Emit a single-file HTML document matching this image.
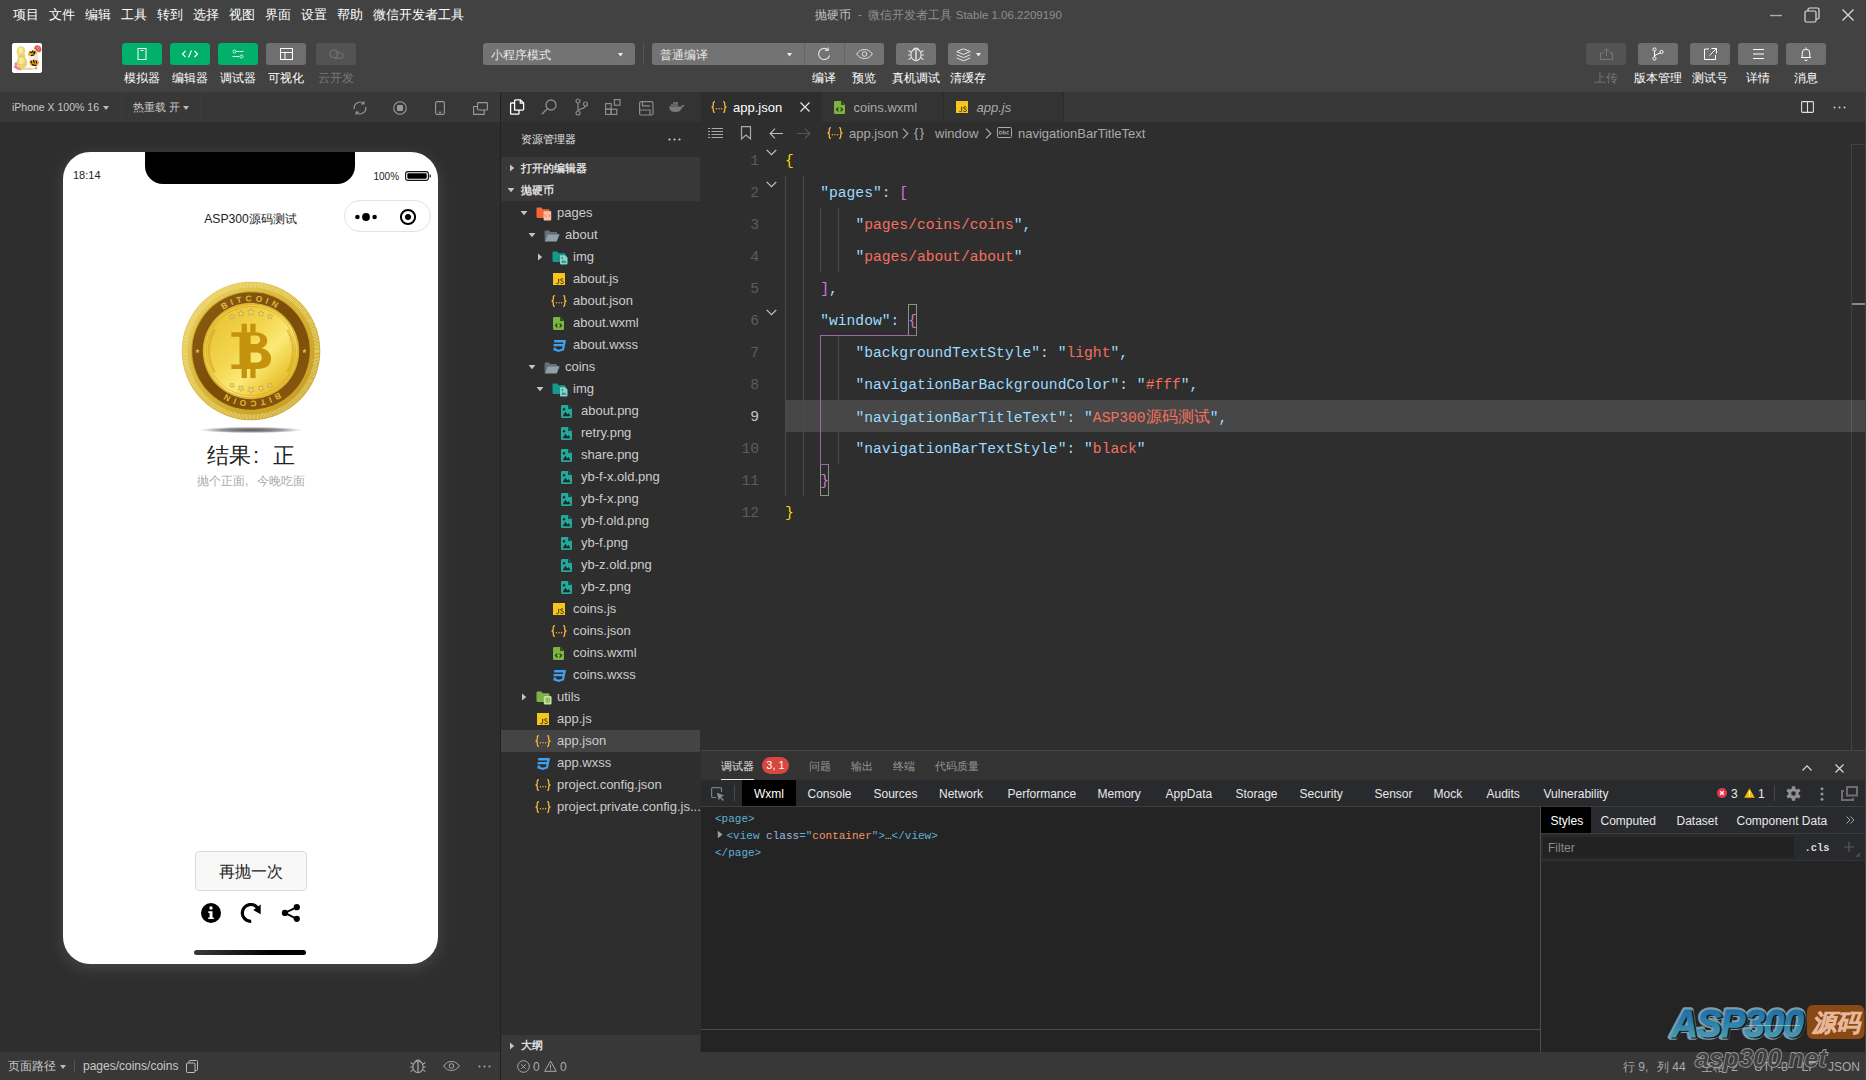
<!DOCTYPE html>
<html lang="zh"><head><meta charset="utf-8"><title>WeChat DevTools</title>
<style>
*{box-sizing:border-box;margin:0;padding:0}
html,body{width:1866px;height:1080px;overflow:hidden;background:#2e2e2e;font-family:"Liberation Sans",sans-serif}
body{font-family:"Liberation Sans",sans-serif;font-size:12px;color:#ccc}
#app{position:relative;width:1866px;height:1080px;overflow:hidden;background:#2e2e2e}
.abs{position:absolute}
.t{position:absolute;white-space:nowrap;line-height:1}
svg{display:block;position:absolute;overflow:visible}
/* ---------- top ---------- */
#menubar{position:absolute;left:0;top:0;width:1866px;height:30px;background:#424242}
#menubar .mi{position:absolute;top:0;height:30px;line-height:30px;font-size:13px;color:#fff;white-space:nowrap}
#title{position:absolute;left:0;top:0;width:1866px;padding-left:11px;height:30px;line-height:30px;text-align:center;font-size:12px;color:#8f8f8f;white-space:nowrap}
#title b{font-weight:normal;color:#c4c4c4}
#toolbar{position:absolute;left:0;top:30px;width:1866px;height:62px;background:#424242}
.tb{position:absolute;top:13px;width:40px;height:22px;border-radius:3px;background:#6f6f6f}
.tb.g{background:#00b06b}
.tb.d{background:#535353}
.tl{position:absolute;top:41px;height:14px;line-height:14px;font-size:12px;color:#fff;text-align:center;white-space:nowrap}
.tl.d{color:#777}
.sel{position:absolute;top:13px;height:22px;border-radius:3px;background:#737373;color:#e8e8e8;font-size:12px;line-height:24px;padding-left:8px;white-space:nowrap}
/* ---------- simulator ---------- */
#simbar{position:absolute;left:0;top:92px;width:500px;height:30px;background:#383838}
#sim{position:absolute;left:0;top:122px;width:500px;height:930px;background:#2e2e2e}
#simfoot{position:absolute;left:0;top:1052px;width:500px;height:28px;background:#383838}
#vdiv{position:absolute;left:500px;top:92px;width:1px;height:988px;background:#222}
#phone{position:absolute;left:63px;top:152px;width:375px;height:812px;background:#fff;border-radius:27px;box-shadow:0 4px 16px rgba(255,255,255,.13);overflow:hidden;color:#000}
/* ---------- explorer ---------- */
#actbar{position:absolute;left:501px;top:92px;width:200px;height:30px;background:#333}
#side{position:absolute;left:501px;top:122px;width:200px;height:930px;background:#2e2e2e}
.hdr{position:absolute;left:501px;width:199px;height:22px;background:#383838;color:#ddd;font-size:11px;font-weight:bold;line-height:22px;white-space:nowrap}
.row{position:absolute;left:501px;width:199px;height:22px;line-height:22px;font-size:13px;color:#ccc;white-space:nowrap}
.row.sel2{background:#444}
.row span{position:absolute;top:0}
/* ---------- editor ---------- */
#tabbar{position:absolute;left:701px;top:92px;width:1165px;height:30px;background:#383838}
.tab{position:absolute;top:0;height:30px;line-height:30px;font-size:13px;color:#aaa;background:#333;border-right:1px solid #2a2a2a;white-space:nowrap}
.tab.on{background:#2e2e2e;color:#fff}
#editor{position:absolute;left:701px;top:122px;width:1165px;height:628px;background:#2e2e2e}
.ln{position:absolute;left:701px;margin-top:1px;width:58px;text-align:right;font-family:"Liberation Mono",monospace;font-size:14.66px;line-height:32px;height:32px;color:#5a5a5a}
.cl{position:absolute;left:785px;margin-top:1px;font-family:"Liberation Mono",monospace;font-size:14.66px;line-height:32px;height:32px;white-space:pre;color:#d4d4d4}
.k{color:#9cdcfe}.s{color:#f4705f}.p{color:#d4d4d4}.b1{color:#ffd700}.b2{color:#da70d6}
/* ---------- panel ---------- */
#panel{position:absolute;left:701px;top:750px;width:1165px;height:302px;background:#333;border-top:1px solid #464646}
#dtbar{position:absolute;left:701px;top:780px;width:1165px;height:27px;background:#292a2d;border-bottom:1px solid #3d3d3d}
.dt{position:absolute;top:780px;height:26px;line-height:28px;font-size:12px;color:#e8e8e8;white-space:nowrap}
#dtbody{position:absolute;left:701px;top:807px;width:1165px;height:245px;background:#242424}
/* ---------- status ---------- */
#status{position:absolute;left:501px;top:1052px;width:1365px;height:28px;background:#383838}

</style></head>
<body>
<div id="app">
<!-- sec_top.html -->
<div id="menubar">
  <div class="mi" style="left:12.5px">项目</div>
  <div class="mi" style="left:48.5px">文件</div>
  <div class="mi" style="left:84.5px">编辑</div>
  <div class="mi" style="left:120.5px">工具</div>
  <div class="mi" style="left:156.5px">转到</div>
  <div class="mi" style="left:192.5px">选择</div>
  <div class="mi" style="left:228.5px">视图</div>
  <div class="mi" style="left:264.5px">界面</div>
  <div class="mi" style="left:300.5px">设置</div>
  <div class="mi" style="left:336.5px">帮助</div>
  <div class="mi" style="left:372.5px">微信开发者工具</div>
</div>
<div id="title"><b>抛硬币</b><span style="margin:0 3.300px"> - </span>微信开发者工具 <span style="font-size:11.500px">Stable 1.06.2209190</span></div>
<!-- window controls -->
<svg style="left:1769px;top:8px" width="14" height="14" viewBox="0 0 14 14"><path d="M1 7.5h12" stroke="#aaa" stroke-width="1.4" fill="none"/></svg>
<svg style="left:1804px;top:7px" width="16" height="16" viewBox="0 0 16 16" fill="none" stroke="#ddd" stroke-width="1.2"><rect x="1" y="4" width="11" height="11" rx="1.5"/><path d="M4 4V2.5A1.5 1.5 0 0 1 5.5 1H13.5A1.5 1.5 0 0 1 15 2.5V10.5A1.5 1.5 0 0 1 13.5 12H12"/></svg>
<svg style="left:1842px;top:9px" width="12" height="12" viewBox="0 0 12 12" fill="none" stroke="#ddd" stroke-width="1.2"><path d="M0.5 0.5L11.5 11.5M11.5 0.5L0.5 11.5"/></svg>

<div id="toolbar">
  <!-- avatar -->
  <div class="abs" style="left:12px;top:13px;width:30px;height:30px;border-radius:3px;background:#fff;overflow:hidden">
    <svg style="left:0;top:0" width="30" height="30" viewBox="0 0 30 30">
      <rect width="30" height="30" fill="#fff"/>
      <ellipse cx="15" cy="25.800" rx="8" ry="1.300" fill="#ead6b0"/>
      <g fill="#ee8493"><circle cx="4.300" cy="21" r="1.700"/><circle cx="3.600" cy="23.800" r="1.800"/><circle cx="6" cy="25.200" r="1.700"/><circle cx="8.300" cy="26" r="1.300"/><circle cx="24" cy="25.300" r="1.200"/></g>
      <ellipse cx="8.900" cy="8.300" rx="4.300" ry="5.200" fill="#eed873"/>
      <ellipse cx="10" cy="19.300" rx="5.200" ry="6.400" fill="#ecd56e"/>
      <rect x="6.300" y="11" width="6.500" height="5" fill="#ecd56e"/>
      <ellipse cx="8.600" cy="7.500" rx="2" ry="3" fill="#f7eca6"/>
      <ellipse cx="9.300" cy="18.300" rx="2.500" ry="3.800" fill="#f6e99c"/>
      <path d="M5.500 13.300h8M5.200 21.500h9.600" stroke="#dcc25a" stroke-width="0.600" fill="none"/>
      <ellipse cx="20.600" cy="10.800" rx="4.600" ry="3.300" fill="#f2ab1c" transform="rotate(-18 20.600 10.800)"/>
      <ellipse cx="22.200" cy="19.600" rx="4.800" ry="3.600" fill="#f0a61a"/>
      <ellipse cx="19.300" cy="14.800" rx="3.400" ry="2.400" fill="#f4f0ea"/>
      <ellipse cx="24.200" cy="14.300" rx="2" ry="3.400" fill="#e6e6e6"/>
      <path d="M17.500 8.700l2.600 1.100M20.300 7.400l1.300 2.800M23 8.200l-0.800 3.100M18.800 12.600l3-0.800M18.800 17.800l1.200 2.800M21.300 16.900l1.100 3.300M24 17.400l0.600 3.300M19.800 21.700l4.800 0.900" stroke="#20160c" stroke-width="1.200" fill="none"/>
      <path d="M22.300 4.400c1-2.600 4-2.800 5.800-0.900 1.900 2 1.800 4.800-0.300 5.700-1.600 0.600-2.400-0.700-3.600-1.800-1.100-1-2.300-1.600-1.900-3z" fill="#d9554f"/>
      <path d="M24 4l3.200 3.600M26 3.200l1.600 2.600" stroke="#f6c8c4" stroke-width="0.600"/>
    </svg>
  </div>
  <!-- left buttons -->
  <div class="tb g" style="left:122px"><svg style="left:15px;top:5px" width="10" height="12" viewBox="0 0 10 12" fill="none" stroke="#fff" stroke-width="1"><rect x="1" y="0.5" width="8" height="11"/><path d="M3.5 2.5h3"/></svg></div>
  <div class="tb g" style="left:170px"><svg style="left:11px;top:6px" width="18" height="10" viewBox="0 0 18 10" fill="none" stroke="#fff" stroke-width="1.1"><path d="M4.5 2L1.5 5l3 3M13.5 2l3 3-3 3M10.5 1.5l-3 7"/></svg></div>
  <div class="tb g" style="left:218px"><svg style="left:14px;top:6px" width="12" height="10" viewBox="0 0 12 10" fill="none" stroke="#d7f5e6" stroke-width="1"><path d="M4 2.5h7.5M0.5 7.5h7"/><circle cx="2.5" cy="2.500" r="1.5"/><circle cx="9.5" cy="7.5" r="1.5"/></svg></div>
  <div class="tb" style="left:266px"><svg style="left:14px;top:5px" width="13" height="12" viewBox="0 0 13 12" fill="none" stroke="#fff" stroke-width="1"><rect x="0.5" y="0.5" width="12" height="11"/><path d="M0.5 4.5h12M5 4.5v7"/></svg></div>
  <div class="tb d" style="left:316px"><svg style="left:13px;top:6px" width="15" height="10" viewBox="0 0 15 10" fill="none" stroke="#777" stroke-width="1"><circle cx="4.8" cy="4.8" r="4"/><path d="M7 5.2a2.6 2.6 0 0 1 4.6-1.2 2.6 2.6 0 0 1 .4 5.2H6"/></svg></div>
  <div class="tl" style="left:112px;width:60px">模拟器</div>
  <div class="tl" style="left:160px;width:60px">编辑器</div>
  <div class="tl" style="left:208px;width:60px">调试器</div>
  <div class="tl" style="left:256px;width:60px">可视化</div>
  <div class="tl d" style="left:306px;width:60px">云开发</div>

  <!-- mode selects -->
  <div class="sel" style="left:483px;width:152px">小程序模式<svg style="left:134.500px;top:9.500px" width="5" height="3.500" viewBox="0 0 6 4"><path d="M0 0h6L3 4z" fill="#eee"/></svg></div>
  <div class="abs" style="left:643px;top:13px;width:1px;height:22px;background:#555"></div>
  <div class="sel" style="left:652px;width:152px;border-radius:3px 0 0 3px">普通编译<svg style="left:134.500px;top:9.500px" width="5" height="3.500" viewBox="0 0 6 4"><path d="M0 0h6L3 4z" fill="#eee"/></svg></div>
  <div class="abs" style="left:804px;top:13px;width:40px;height:22px;background:#737373;border-left:1px solid #646464">
    <svg style="left:12px;top:4px" width="15" height="14" viewBox="0 0 15 14" fill="none" stroke="#e0e0e0" stroke-width="1.1"><path d="M12.6 8.5A5.6 5.6 0 1 1 11.2 3"/><path d="M11.2 0.4V3.4H8.200"/></svg>
  </div>
  <div class="abs" style="left:844px;top:13px;width:40px;height:22px;background:#737373;border-left:1px solid #646464;border-radius:0 3px 3px 0">
    <svg style="left:11px;top:6px" width="17" height="10" viewBox="0 0 17 10" fill="none" stroke="#e0e0e0" stroke-width="1"><path d="M0.6 5C3 1.6 5.600 0.500 8.500 0.500S14 1.600 16.400 5C14 8.400 11.400 9.500 8.500 9.500S3 8.400 0.600 5z"/><circle cx="8.5" cy="5" r="2.3"/></svg>
  </div>
  <div class="tb" style="left:896px;background:#737373">
    <svg style="left:11px;top:3px" width="18" height="16" viewBox="0 0 18 16" fill="none" stroke="#e6e6e6" stroke-width="1.100"><ellipse cx="9" cy="8.800" rx="5.100" ry="5.900"/><path d="M6.300 4.100A2.800 2.800 0 0 1 11.700 4.100"/><path d="M9 3.600V14.400" stroke-width="1.700" stroke="#d2d2d2"/><path d="M4.300 6.400L1.600 4.500M3.900 9H1.100M4.300 11.600L1.600 13.600M13.700 6.400L16.400 4.500M14.100 9H16.900M13.700 11.600L16.400 13.600"/></svg>
  </div>
  <div class="tb" style="left:948px;background:#737373">
    <svg style="left:7.500px;top:4.500px" width="15" height="14" viewBox="0 0 15 14" fill="none" stroke="#e6e6e6" stroke-width="1"><path d="M7.500 0.800L14.300 3.600 7.500 6.400 0.700 3.600z"/><path d="M0.700 6.800l6.800 2.800 6.800-2.800M0.700 10l6.800 2.800 6.800-2.800"/></svg>
    <svg style="left:28px;top:10px" width="5" height="3.500" viewBox="0 0 6 4"><path d="M0 0h6L3 4z" fill="#eee"/></svg>
  </div>
  <div class="tl" style="left:794px;width:60px">编译</div>
  <div class="tl" style="left:834px;width:60px">预览</div>
  <div class="tl" style="left:886px;width:60px">真机调试</div>
  <div class="tl" style="left:938px;width:60px">清缓存</div>

  <!-- right buttons -->
  <div class="tb d" style="left:1586px"><svg style="left:14px;top:5px" width="13" height="12" viewBox="0 0 13 12" fill="none" stroke="#777" stroke-width="1"><path d="M3.500 5H0.500v6.500h12V5H9.500M6.500 8V0.800M3.800 3.400L6.500 0.700l2.700 2.700"/></svg></div>
  <div class="tb" style="left:1638px"><svg style="left:14px;top:4px" width="12" height="14" viewBox="0 0 12 14" fill="none" stroke="#fff" stroke-width="1"><circle cx="2.5" cy="2.500" r="1.6"/><circle cx="2.5" cy="11.500" r="1.6"/><circle cx="9.500" cy="5" r="1.600"/><path d="M2.500 4.100v5.800M2.500 9.500c0-2.500 5-2.500 5.800-3.500"/></svg></div>
  <div class="tb" style="left:1690px"><svg style="left:14px;top:5px" width="13" height="12" viewBox="0 0 13 12" fill="none" stroke="#fff" stroke-width="1"><path d="M5 1H0.500v10.500h11V7M7.500 0.500h5v5M12.300 0.700L5.500 7.500"/></svg></div>
  <div class="tb" style="left:1738px"><svg style="left:15px;top:6px" width="11" height="10" viewBox="0 0 11 10" fill="none" stroke="#fff" stroke-width="1"><path d="M0 0.500h11M0 5h11M0 9.500h11"/></svg></div>
  <div class="tb" style="left:1786px"><svg style="left:14px;top:4px" width="12" height="14" viewBox="0 0 12 14" fill="none" stroke="#fff" stroke-width="1"><path d="M6 0.500v1.200M1 10.500h10M2.200 10.500V6a3.800 3.800 0 0 1 7.600 0v4.500M4.800 12.500a1.200 1.200 0 0 0 2.400 0"/></svg></div>
  <div class="tl d" style="left:1576px;width:60px">上传</div>
  <div class="tl" style="left:1628px;width:60px">版本管理</div>
  <div class="tl" style="left:1680px;width:60px">测试号</div>
  <div class="tl" style="left:1728px;width:60px">详情</div>
  <div class="tl" style="left:1776px;width:60px">消息</div>
</div>

<!-- sec_sim.html -->
<div id="simbar">
  <div class="t" style="left:12px;top:10px;font-size:10.500px;color:#c8c8c8">iPhone X 100% 16</div>
  <svg style="left:102.500px;top:14px" width="6" height="4" viewBox="0 0 6 4"><path d="M0 0h6L3 4z" fill="#bbb"/></svg>
  <div class="abs" style="left:121px;top:0;width:1px;height:30px;background:#3d3d3d"></div><div class="abs" style="left:200px;top:0;width:1px;height:30px;background:#3c3c3c"></div>
  <div class="t" style="left:132.500px;top:10px;font-size:11px;color:#c8c8c8">热重载 开</div>
  <svg style="left:183px;top:14px" width="6" height="4" viewBox="0 0 6 4"><path d="M0 0h6L3 4z" fill="#bbb"/></svg>
  <!-- refresh -->
  <svg style="left:353px;top:9px" width="14" height="14" viewBox="0 0 14 14" fill="none" stroke="#9a9a9a" stroke-width="1.1"><path d="M1.300 8.200A5.800 5.800 0 0 1 10.800 2.600"/><path d="M10.900 0.300V2.900H8.300"/><path d="M12.700 5.800A5.800 5.800 0 0 1 3.200 11.400"/><path d="M3.100 13.700V11.100H5.700"/></svg>
  <!-- stop -->
  <svg style="left:393px;top:9px" width="14" height="14" viewBox="0 0 14 14"><circle cx="7" cy="7" r="6.300" fill="none" stroke="#9a9a9a" stroke-width="1.1"/><rect x="4" y="4" width="6" height="6" rx="1" fill="#9a9a9a"/></svg>
  <!-- phone -->
  <svg style="left:435px;top:9px" width="10" height="14" viewBox="0 0 10 14" fill="none" stroke="#9a9a9a" stroke-width="1.100"><rect x="0.600" y="0.600" width="8.800" height="12.800" rx="1.500"/><path d="M3.500 11.200h3"/></svg>
  <!-- windows -->
  <svg style="left:473px;top:9.500px" width="15" height="13" viewBox="0 0 15 13" fill="none" stroke="#9a9a9a" stroke-width="1.100"><rect x="4.500" y="0.600" width="9.900" height="7.400" rx="0.800"/><path d="M4.500 4.500H0.600v7.900h10.600V8"/></svg>
</div>
<div id="sim"></div>
<div id="phone">
  <!-- notch -->
  <div class="abs" style="left:82px;top:0;width:210px;height:32px;background:#000;border-radius:0 0 18px 18px"></div>
  <div class="t" style="left:10px;top:17.500px;font-size:11px;color:#222">18:14</div>
  <div class="t" style="left:310.500px;top:19.500px;font-size:10px;color:#222">100%</div>
  <svg style="left:342px;top:19px" width="27" height="10" viewBox="0 0 27 10"><rect x="0.600" y="0.600" width="22.800" height="8.800" rx="2.400" fill="none" stroke="#111" stroke-width="1.100"/><rect x="2.300" y="2.300" width="19.400" height="5.400" rx="1.100" fill="#000"/><path d="M24.600 3.200v3.600c0.900-0.300 1.400-0.900 1.400-1.800s-0.500-1.500-1.400-1.800z" fill="#111"/></svg>
  <!-- nav -->
  <div class="t" style="left:0;top:61px;width:375px;text-align:center;font-size:12.200px;color:#222">ASP300源码测试</div>
  <div class="abs" style="left:281px;top:48px;width:87px;height:32px;border:1px solid #e2e2e2;border-radius:16px;background:#fff"></div>
  <svg style="left:290px;top:59.600px" width="26" height="10" viewBox="0 0 26 10" fill="#000"><circle cx="4.400" cy="5" r="2.300"/><circle cx="13" cy="5" r="3.900"/><circle cx="21.600" cy="5" r="2.300"/></svg>
  <svg style="left:336.200px;top:55.600px" width="18" height="18" viewBox="0 0 18 18"><circle cx="9" cy="9" r="7.100" fill="none" stroke="#000" stroke-width="2"/><circle cx="9" cy="9" r="3" fill="#000"/></svg>
  <!-- coin -->
  <svg style="left:116.500px;top:127.500px" width="142" height="160" viewBox="-71 -71 142 160">
    <defs>
      <radialGradient id="gsh" cx="50%" cy="50%" r="50%"><stop offset="0" stop-color="#4a4a50" stop-opacity=".95"/><stop offset=".6" stop-color="#6a6a70" stop-opacity=".7"/><stop offset="1" stop-color="#888" stop-opacity="0"/></radialGradient>
      <linearGradient id="grim" x1="0" y1="0" x2="1" y2="1"><stop offset="0" stop-color="#ecd668"/><stop offset=".5" stop-color="#d7b433"/><stop offset="1" stop-color="#bf981f"/></linearGradient>
      <linearGradient id="gbr" x1="0" y1="0" x2="1" y2="1"><stop offset="0" stop-color="#8d5f12"/><stop offset=".5" stop-color="#7a4c08"/><stop offset="1" stop-color="#8a5a0e"/></linearGradient>
      <linearGradient id="gin" x1="0" y1="0" x2="1" y2="1"><stop offset="0" stop-color="#e6bd2c"/><stop offset=".42" stop-color="#f3d64e"/><stop offset=".6" stop-color="#fbea76"/><stop offset=".8" stop-color="#ecc638"/><stop offset="1" stop-color="#d6a51c"/></linearGradient>
      <path id="arcT" d="M-49.700 0A49.700 49.700 0 0 1 49.700 0"/>
      <path id="arcB" d="M56.500 0A56.500 56.500 0 0 1 -56.500 0"/>
    </defs>
    <ellipse cx="0" cy="79" rx="52" ry="3.200" fill="url(#gsh)"/>
    <circle r="69.300" fill="url(#grim)"/>
    <circle r="66" fill="none" stroke="#f6e69a" stroke-width="5" stroke-dasharray="0.700 0.700" opacity=".75"/>
    <circle r="59.800" fill="#cfa52a"/>
    <circle r="58.800" fill="url(#gbr)"/>
    <circle r="48.200" fill="#dcb535"/>
    <circle r="46.300" fill="url(#gin)"/>
    <circle r="44.600" fill="none" stroke="#cc9a16" stroke-width="0.700" opacity=".7"/>
    <path d="M-36.400-21A42 42 0 0 0 -36.400 21M36.400-21A42 42 0 0 1 36.400 21" fill="none" stroke="#c6951a" stroke-width="2.500" stroke-dasharray="1.100 0.700" opacity=".7"/>
    <g transform="rotate(180)"><text font-family="Liberation Sans, sans-serif" font-weight="bold" font-size="8.500" fill="#e0b940" letter-spacing="3.500" text-anchor="middle"><textPath href="#arcT" startOffset="50%">BITCOIN</textPath></text></g>
    <text font-family="Liberation Sans, sans-serif" font-weight="bold" font-size="8.500" fill="#e0b940" letter-spacing="3.500" text-anchor="middle"><textPath href="#arcT" startOffset="50%">BITCOIN</textPath></text>
    <!-- side stars -->
    <path id="st" d="M0-2.400l0.700 1.600 1.700 0.100-1.300 1.100 0.400 1.700L0 1.200l-1.500 0.900 0.400-1.700-1.300-1.100 1.700-0.100z" fill="#dcb944" transform="translate(-53.500 0)"/>
    <path d="M0-2.400l0.700 1.600 1.700 0.100-1.300 1.100 0.400 1.700L0 1.200l-1.500 0.900 0.400-1.700-1.300-1.100 1.700-0.100z" fill="#dcb944" transform="translate(53.500 0)"/>
    <!-- top/bottom stars -->
    <g fill="#ead690" stroke="#b48a18" stroke-width="0.450" opacity=".95">
      <path d="M0-3.400l1 2.300 2.400 0.200-1.800 1.600 0.600 2.400L0 1.800l-2.200 1.300 0.600-2.400-1.800-1.600 2.400-0.200z" transform="translate(0 -39)"/>
      <path d="M0-3l0.900 2 2.100 0.200-1.600 1.400 0.500 2.100L0 1.600l-1.900 1.100 0.500-2.100-1.600-1.400 2.100-0.200z" transform="translate(-10 -37.500)"/>
      <path d="M0-3l0.900 2 2.100 0.200-1.600 1.400 0.500 2.100L0 1.600l-1.900 1.100 0.500-2.100-1.600-1.400 2.100-0.200z" transform="translate(10 -37.500)"/>
      <path d="M0-2.600l0.800 1.700 1.800 0.200-1.400 1.200 0.400 1.800L0 1.400l-1.600 0.900 0.400-1.800-1.400-1.200 1.800-0.200z" transform="translate(-19 -34.500)"/>
      <path d="M0-2.600l0.800 1.700 1.800 0.200-1.400 1.200 0.400 1.800L0 1.400l-1.600 0.900 0.400-1.800-1.400-1.200 1.800-0.200z" transform="translate(19 -34.500)"/>
      <path d="M0-3.400l1 2.300 2.400 0.200-1.800 1.600 0.600 2.400L0 1.800l-2.200 1.300 0.600-2.400-1.800-1.600 2.400-0.200z" transform="translate(0 39) rotate(180)"/>
      <path d="M0-3l0.900 2 2.100 0.200-1.600 1.400 0.500 2.100L0 1.600l-1.900 1.100 0.500-2.100-1.600-1.400 2.100-0.200z" transform="translate(-10 37.500) rotate(180)"/>
      <path d="M0-3l0.900 2 2.100 0.200-1.600 1.400 0.500 2.100L0 1.600l-1.900 1.100 0.500-2.100-1.600-1.400 2.100-0.200z" transform="translate(10 37.500) rotate(180)"/>
      <path d="M0-2.600l0.800 1.700 1.800 0.200-1.400 1.200 0.400 1.800L0 1.400l-1.600 0.900 0.400-1.800-1.400-1.200 1.800-0.200z" transform="translate(-19 34.500) rotate(180)"/>
      <path d="M0-2.600l0.800 1.700 1.800 0.200-1.400 1.200 0.400 1.800L0 1.400l-1.600 0.900 0.400-1.800-1.400-1.200 1.800-0.200z" transform="translate(19 34.500) rotate(180)"/>
    </g>
    <!-- B symbol -->
    <g fill="#c4920d">
      <rect x="-9.400" y="-27.300" width="5.300" height="9"/><rect x="-0.700" y="-27.300" width="5.300" height="9"/>
      <rect x="-9.400" y="17.500" width="5.300" height="9.600"/><rect x="-0.700" y="17.500" width="5.300" height="9.600"/>
      <path fill-rule="evenodd" d="M-19.600-18.700H4C12-18.700 16.200-15 16.200-10.500C16.200-6.500 13.800-4 10.500-2.800C16-1.800 20.100 2 20.100 7.500C20.100 14 15 18 6.500 18H-19.600V13.500H-11.500V-14.200H-19.600ZM-0.400-15.500V-7H4.500C7.700-7 9.200-8.600 9.200-11.200C9.200-13.900 7.700-15.500 4.500-15.500ZM-0.400 1.500V11.500H5.200C9 11.500 10.700 9.600 10.700 6.500C10.700 3.400 9 1.500 5.200 1.500Z"/>
    </g>
  </svg>
  <div class="t" style="left:0;top:293px;width:375px;text-align:center;font-size:22px;color:#222">结果<span style="display:inline-block;width:22px;text-align:left;padding-left:2.400px">:</span>正</div>
  <div class="t" style="left:0;top:323px;width:375px;text-align:center;font-size:12px;color:#aaa">抛个正面<span style="display:inline-block;width:12px;text-align:left;padding-left:0.500px">,</span>今晚吃面</div>
  <!-- button -->
  <div class="abs" style="left:132px;top:699px;width:112px;height:40px;border:1px solid #dcdcdc;border-radius:4px;background:#f8f8f8;text-align:center;line-height:40px;font-size:16px;color:#222">再抛一次</div>
  <!-- info icon -->
  <svg style="left:138px;top:751px" width="20" height="20" viewBox="0 0 20 20"><circle cx="10" cy="10" r="10" fill="#000"/><circle cx="10" cy="5" r="1.700" fill="#fff"/><path d="M7.300 8.300h4.200v6.200h1.300v1.600H7.200v-1.600h1.400V9.900H7.300z" fill="#fff"/></svg>
  <!-- retry icon -->
  <svg style="left:177px;top:750px" width="22" height="22" viewBox="0 0 22 22"><path d="M11.200 19.300A8.400 8.400 0 1 1 17.200 5.500" fill="none" stroke="#000" stroke-width="3.200"/><path d="M20.700 2.600V12.300L13.300 8.100z" fill="#000"/></svg>
  <!-- share icon -->
  <svg style="left:218px;top:751px" width="20" height="20" viewBox="0 0 20 20"><path d="M15.800 4.200L3.900 9.900l11.900 5.900" fill="none" stroke="#000" stroke-width="1.900"/><circle cx="15.800" cy="4.200" r="3.100"/><circle cx="3.900" cy="9.900" r="3.100"/><circle cx="15.800" cy="15.800" r="3.100"/></svg>
  <!-- home indicator -->
  <div class="abs" style="left:131px;top:798px;width:112px;height:5px;border-radius:3px;background:linear-gradient(90deg,#3a3a3a,#000 70%)"></div>
</div>
<div id="simfoot">
  <div class="t" style="left:8px;top:8px;font-size:12px;color:#c8c8c8">页面路径</div>
  <svg style="left:60px;top:13px" width="6" height="4" viewBox="0 0 6 4"><path d="M0 0h6L3 4z" fill="#bbb"/></svg>
  <div class="abs" style="left:74px;top:8px;width:1px;height:12px;background:#555"></div>
  <div class="t" style="left:83px;top:8px;font-size:12px;color:#c8c8c8">pages/coins/coins</div>
  <svg style="left:186px;top:8px" width="12" height="13" viewBox="0 0 12 13" fill="none" stroke="#bbb" stroke-width="1"><rect x="0.500" y="3" width="8.500" height="9.500" rx="1"/><path d="M3 3V1.500a1 1 0 0 1 1-1h6.500a1 1 0 0 1 1 1V9.500a1 1 0 0 1-1 1H9"/></svg>
  <svg style="left:409px;top:6px" width="18" height="16" viewBox="0 0 18 16" fill="none" stroke="#a8a8a8" stroke-width="1.100"><ellipse cx="9" cy="8.800" rx="5.100" ry="5.900"/><path d="M6.300 4.100A2.800 2.800 0 0 1 11.700 4.100"/><path d="M9 3.600V14.400" stroke-width="1.700" stroke="#8e8e8e"/><path d="M4.300 6.400L1.600 4.500M3.900 9H1.100M4.300 11.600L1.600 13.600M13.700 6.400L16.400 4.500M14.100 9H16.900M13.700 11.600L16.400 13.600"/></svg>
  <svg style="left:443px;top:9px" width="17" height="10" viewBox="0 0 17 10" fill="none" stroke="#aaa" stroke-width="1"><path d="M0.600 5C3 1.600 5.600 0.500 8.500 0.500S14 1.600 16.400 5C14 8.400 11.400 9.500 8.500 9.500S3 8.400 0.600 5z"/><circle cx="8.500" cy="5" r="2.300"/></svg>
  <svg style="left:478px;top:13px" width="13" height="3" viewBox="0 0 13 3" fill="#aaa"><circle cx="1.500" cy="1.500" r="1"/><circle cx="6.500" cy="1.500" r="1"/><circle cx="11.500" cy="1.500" r="1"/></svg>
</div>
<div id="vdiv"></div>

<!-- sec_explorer.html -->
<svg width="0" height="0" style="left:0;top:0"><defs>
<symbol id="i-down" viewBox="0 0 8 6"><path d="M0.600 1h6.800L4 5.200z" fill="#c5c5c5"/></symbol>
<symbol id="i-right" viewBox="0 0 6 8"><path d="M1 0.600v6.800L5.200 4z" fill="#c5c5c5"/></symbol>
<symbol id="i-fpages" viewBox="0 0 16 14"><path d="M0.500 1.800C0.500 1.100 1 0.600 1.700 0.600H5.200L6.800 2.200H12.300C13 2.200 13.500 2.700 13.500 3.400V9.800C13.500 10.500 13 11 12.300 11H1.700C1 11 0.500 10.500 0.500 9.800Z" fill="#f2673a"/><path d="M7.600 4.200H15.200V12.400C15.200 13 14.700 13.500 14.100 13.500H8.700C8.100 13.500 7.600 13 7.600 12.400Z" fill="#fbc0ab"/><path d="M10.400 7.200L9 8.700l1.400 1.500M12.400 7.200l1.400 1.500-1.400 1.500" fill="none" stroke="#f2673a" stroke-width="0.900"/></symbol>
<symbol id="i-fopen" viewBox="0 0 16 12"><path d="M0.600 1.600C0.600 1 1.100 0.500 1.700 0.500H5L6.500 2H12C12.600 2 13.100 2.500 13.100 3.100V4H3.800L0.600 10.500Z" fill="#62727d"/><path d="M3.600 4.300H15.600L12.700 11.500H0.700Z" fill="#8fa0ab"/></symbol>
<symbol id="i-fimg" viewBox="0 0 16 14"><path d="M0.500 1.800C0.500 1.100 1 0.600 1.700 0.600H5.200L6.800 2.200H12.300C13 2.200 13.500 2.700 13.500 3.400V9.800C13.500 10.500 13 11 12.300 11H1.700C1 11 0.500 10.500 0.500 9.800Z" fill="#16998a"/><path d="M8 4.200H13.200L15.500 6.500V12.400C15.500 13 15 13.500 14.400 13.500H9.100C8.500 13.500 8 13 8 12.400Z" fill="#86d3c8"/><path d="M9.200 11.800L11 8.800l1.200 1.600 0.900-0.900 1.400 2.300z" fill="#16998a"/><circle cx="10.300" cy="7" r="0.900" fill="#16998a"/></symbol>
<symbol id="i-futil" viewBox="0 0 16 14"><path d="M0.500 1.800C0.500 1.100 1 0.600 1.700 0.600H5.200L6.800 2.200H12.300C13 2.200 13.500 2.700 13.500 3.400V9.800C13.500 10.500 13 11 12.300 11H1.700C1 11 0.500 10.500 0.500 9.800Z" fill="#7cb342"/><rect x="7.800" y="5" width="7.700" height="8.500" rx="1.200" fill="#c5e1a5"/><path d="M10 7.200h3.300v4h-3.300zM11.650 7.200v4M10 9.200h3.300" fill="none" stroke="#7cb342" stroke-width="0.900"/></symbol>
<symbol id="i-js" viewBox="0 0 12 12"><rect width="12" height="12" fill="#f6c41f"/><path d="M5.700 5.800v3.500c0 1-0.500 1.400-1.300 1.400-0.500 0-0.900-0.200-1.200-0.600M10.300 6.500c-0.300-0.500-0.800-0.700-1.400-0.700-0.800 0-1.300 0.400-1.300 1 0 1.500 2.900 0.900 2.900 2.500 0 0.800-0.600 1.300-1.600 1.300-0.700 0-1.300-0.300-1.600-0.800" fill="none" stroke="#3b3100" stroke-width="1"/></symbol>
<symbol id="i-json" viewBox="0 0 16 12"><path d="M4 0.700C2.600 0.700 2.300 1.400 2.300 2.300V4.200C2.300 5.200 1.800 5.800 0.700 6 1.800 6.200 2.300 6.800 2.300 7.800V9.700C2.300 10.600 2.600 11.300 4 11.300M12 0.700C13.400 0.700 13.700 1.400 13.700 2.300V4.200C13.700 5.200 14.200 5.800 15.300 6 14.200 6.200 13.700 6.800 13.700 7.800V9.700C13.700 10.600 13.400 11.300 12 11.300" fill="none" stroke="#f3b63a" stroke-width="1.300"/><circle cx="5.400" cy="7.800" r="0.750" fill="#f3b63a"/><circle cx="8" cy="7.800" r="0.750" fill="#f3b63a"/><circle cx="10.600" cy="7.800" r="0.750" fill="#f3b63a"/></symbol>
<symbol id="i-wxml" viewBox="0 0 11 13"><path d="M1.300 0H7L11 4V11.700C11 12.400 10.400 13 9.700 13H1.300C0.600 13 0 12.400 0 11.700V1.300C0 0.600 0.600 0 1.300 0Z" fill="#7db342"/><path d="M7 0V4H11Z" fill="#33500f"/><path d="M4.400 6.600L2.500 8.500l1.900 1.900M6.600 6.600l1.900 1.900-1.900 1.900" fill="none" stroke="#1d2f08" stroke-width="1.100"/></symbol>
<symbol id="i-wxss" viewBox="0 0 14 12"><path d="M2.200 0H14L12 10.200 6.600 12 1.300 10.200 1.800 7.600H4.100L3.900 8.700 7 9.800 10.100 8.700 10.500 6.300H1.300L1.800 3.900H11L11.300 2.400H2.200Z" fill="#3fa2f0"/></symbol>
<symbol id="i-png" viewBox="0 0 11 13"><path d="M1.300 0H7L11 4V11.700C11 12.400 10.400 13 9.700 13H1.300C0.600 13 0 12.400 0 11.700V1.300C0 0.600 0.600 0 1.300 0Z" fill="#27a79a"/><path d="M7 0V4H11Z" fill="#0c4f48"/><path d="M1.600 11.200L4.400 6.800l2 2.600 1.200-1.300 2 3.100z" fill="#1b2b2a"/><circle cx="3" cy="4.300" r="1.200" fill="#1b2b2a"/></symbol>
</defs></svg>
<div id="actbar">
<svg style="left:8px;top:6px" width="16" height="18" viewBox="0 0 16 18" fill="none" stroke="#fff" stroke-width="1.300" stroke-linejoin="round"><path d="M5.600 12.100V2.700C5.600 2.200 5.900 1.900 6.400 1.900H11.500L14.600 5V11.300C14.600 11.800 14.300 12.100 13.800 12.100Z"/><path d="M11.300 1.900V5.200H14.600"/><path d="M5.600 5H2.400C1.900 5 1.600 5.300 1.600 5.800V15.400C1.600 15.900 1.900 16.200 2.400 16.200H9.200C9.700 16.200 10 15.900 10 15.400V12.100"/></svg>
<svg style="left:40px;top:7px" width="16" height="16" viewBox="0 0 16 16" fill="none" stroke="#8c8c8c" stroke-width="1.300"><circle cx="10" cy="6" r="5"/><path d="M6.500 9.500L0.800 15.200"/></svg>
<svg style="left:74px;top:6px" width="13" height="18" viewBox="0 0 13 18" fill="none" stroke="#8c8c8c" stroke-width="1.200"><circle cx="3" cy="3" r="2"/><circle cx="3" cy="15" r="2"/><circle cx="10.500" cy="6" r="2"/><path d="M3 5v8M10.500 8c0 3-7.500 2.500-7.500 5"/></svg>
<svg style="left:104px;top:7px" width="16" height="16" viewBox="0 0 16 16" fill="none" stroke="#8c8c8c" stroke-width="1.200"><rect x="0.600" y="4.600" width="5.600" height="5.600"/><rect x="0.600" y="10.200" width="5.600" height="5.200"/><rect x="6.200" y="10.200" width="5.600" height="5.200"/><rect x="9.400" y="0.600" width="5.600" height="5.600"/></svg>
<svg style="left:138px;top:9px" width="15" height="15" viewBox="0 0 15 15" fill="none" stroke="#8c8c8c" stroke-width="1.200"><rect x="0.600" y="0.600" width="13.400" height="13.400" rx="1.500"/><path d="M3.500 0.600v4.200h7.500M0.600 9h10.400v5"/></svg>
<svg style="left:167px;top:9px" width="17" height="12" viewBox="0 0 20 14" fill="#7a7a7a"><path d="M1 6.500h14.500c0.800-0.300 1.400-1.200 1.300-2.200 1 0.500 1.600 0.300 2.600 0.400-0.300 1.600-1.400 2.300-2.700 2.500C15.600 10.900 12.800 13 8.500 13 4 13 1.500 10.800 1 6.500z"/><path d="M3.500 3.800h2.300v2.200H3.500zM6.300 3.800h2.300v2.200H6.300zM9.100 3.800h2.300v2.200H9.100zM6.300 1.200h2.300v2.200H6.300zM9.100 1.200h2.300v2.200H9.100z"/></svg>
</div>
<div id="side"></div>
<div class="t" style="left:521px;top:134px;font-size:11px;color:#e4e4e4">资源管理器</div>
<svg style="left:668px;top:137.500px" width="13" height="3" viewBox="0 0 13 3" fill="#ccc"><circle cx="1.500" cy="1.500" r="1.100"/><circle cx="6.500" cy="1.500" r="1.100"/><circle cx="11.500" cy="1.500" r="1.100"/></svg>
<div class="hdr" style="top:157px"><svg style="left:7.500px;top:7px" width="6" height="8"><use href="#i-right"/></svg><span style="position:absolute;left:20px">打开的编辑器</span></div>
<div class="hdr" style="top:179px"><svg style="left:6px;top:8px" width="8" height="6"><use href="#i-down"/></svg><span style="position:absolute;left:20px">抛硬币</span></div>
<div class="row" style="top:202px"><svg style="left:19px;top:8px" width="8" height="6"><use href="#i-down"/></svg><svg style="left:34.5px;top:4.5px" width="16" height="14"><use href="#i-fpages"/></svg><span style="left:56px">pages</span></div>
<div class="row" style="top:224px"><svg style="left:27px;top:8px" width="8" height="6"><use href="#i-down"/></svg><svg style="left:42.5px;top:5.5px" width="16" height="12"><use href="#i-fopen"/></svg><span style="left:64px">about</span></div>
<div class="row" style="top:246px"><svg style="left:36px;top:7px" width="6" height="8"><use href="#i-right"/></svg><svg style="left:50.5px;top:4.5px" width="16" height="14"><use href="#i-fimg"/></svg><span style="left:72px">img</span></div>
<div class="row" style="top:268px"><svg style="left:51.5px;top:5px" width="12" height="12"><use href="#i-js"/></svg><span style="left:72px">about.js</span></div>
<div class="row" style="top:290px"><svg style="left:49.5px;top:5px" width="16" height="12"><use href="#i-json"/></svg><span style="left:72px">about.json</span></div>
<div class="row" style="top:312px"><svg style="left:52px;top:4.5px" width="11" height="13"><use href="#i-wxml"/></svg><span style="left:72px">about.wxml</span></div>
<div class="row" style="top:334px"><svg style="left:51px;top:5.5px" width="14" height="12"><use href="#i-wxss"/></svg><span style="left:72px">about.wxss</span></div>
<div class="row" style="top:356px"><svg style="left:27px;top:8px" width="8" height="6"><use href="#i-down"/></svg><svg style="left:42.5px;top:5.5px" width="16" height="12"><use href="#i-fopen"/></svg><span style="left:64px">coins</span></div>
<div class="row" style="top:378px"><svg style="left:35px;top:8px" width="8" height="6"><use href="#i-down"/></svg><svg style="left:50.5px;top:4.5px" width="16" height="14"><use href="#i-fimg"/></svg><span style="left:72px">img</span></div>
<div class="row" style="top:400px"><svg style="left:60px;top:4.5px" width="11" height="13"><use href="#i-png"/></svg><span style="left:80px">about.png</span></div>
<div class="row" style="top:422px"><svg style="left:60px;top:4.5px" width="11" height="13"><use href="#i-png"/></svg><span style="left:80px">retry.png</span></div>
<div class="row" style="top:444px"><svg style="left:60px;top:4.5px" width="11" height="13"><use href="#i-png"/></svg><span style="left:80px">share.png</span></div>
<div class="row" style="top:466px"><svg style="left:60px;top:4.5px" width="11" height="13"><use href="#i-png"/></svg><span style="left:80px">yb-f-x.old.png</span></div>
<div class="row" style="top:488px"><svg style="left:60px;top:4.5px" width="11" height="13"><use href="#i-png"/></svg><span style="left:80px">yb-f-x.png</span></div>
<div class="row" style="top:510px"><svg style="left:60px;top:4.5px" width="11" height="13"><use href="#i-png"/></svg><span style="left:80px">yb-f.old.png</span></div>
<div class="row" style="top:532px"><svg style="left:60px;top:4.5px" width="11" height="13"><use href="#i-png"/></svg><span style="left:80px">yb-f.png</span></div>
<div class="row" style="top:554px"><svg style="left:60px;top:4.5px" width="11" height="13"><use href="#i-png"/></svg><span style="left:80px">yb-z.old.png</span></div>
<div class="row" style="top:576px"><svg style="left:60px;top:4.5px" width="11" height="13"><use href="#i-png"/></svg><span style="left:80px">yb-z.png</span></div>
<div class="row" style="top:598px"><svg style="left:51.5px;top:5px" width="12" height="12"><use href="#i-js"/></svg><span style="left:72px">coins.js</span></div>
<div class="row" style="top:620px"><svg style="left:49.5px;top:5px" width="16" height="12"><use href="#i-json"/></svg><span style="left:72px">coins.json</span></div>
<div class="row" style="top:642px"><svg style="left:52px;top:4.5px" width="11" height="13"><use href="#i-wxml"/></svg><span style="left:72px">coins.wxml</span></div>
<div class="row" style="top:664px"><svg style="left:51px;top:5.5px" width="14" height="12"><use href="#i-wxss"/></svg><span style="left:72px">coins.wxss</span></div>
<div class="row" style="top:686px"><svg style="left:20px;top:7px" width="6" height="8"><use href="#i-right"/></svg><svg style="left:34.5px;top:4.5px" width="16" height="14"><use href="#i-futil"/></svg><span style="left:56px">utils</span></div>
<div class="row" style="top:708px"><svg style="left:35.5px;top:5px" width="12" height="12"><use href="#i-js"/></svg><span style="left:56px">app.js</span></div>
<div class="row sel2" style="top:730px"><svg style="left:33.5px;top:5px" width="16" height="12"><use href="#i-json"/></svg><span style="left:56px">app.json</span></div>
<div class="row" style="top:752px"><svg style="left:35px;top:5.5px" width="14" height="12"><use href="#i-wxss"/></svg><span style="left:56px">app.wxss</span></div>
<div class="row" style="top:774px"><svg style="left:33.5px;top:5px" width="16" height="12"><use href="#i-json"/></svg><span style="left:56px">project.config.json</span></div>
<div class="row" style="top:796px"><svg style="left:33.5px;top:5px" width="16" height="12"><use href="#i-json"/></svg><span style="left:56px">project.private.config.js...</span></div>
<div class="hdr" style="top:1035px;height:21px;line-height:21px"><svg style="left:8px;top:7px" width="6" height="8"><use href="#i-right"/></svg><span style="position:absolute;left:20px">大纲</span></div>
<!-- sec_editor.html -->
<div id="tabbar">
<div class="tab on" style="left:0;width:120px"><svg style="left:10px;top:9px" width="16" height="12"><use href="#i-json"/></svg><span class="t" style="left:32px;top:8.500px;font-size:13px;line-height:14px;color:#fff">app.json</span><svg style="left:98.500px;top:10px" width="10" height="10" viewBox="0 0 10 10" fill="none" stroke="#e8e8e8" stroke-width="1.200"><path d="M0.500 0.500l9 9M9.500 0.500l-9 9"/></svg></div>
<div class="tab" style="left:120px;width:123px"><svg style="left:12.500px;top:8.500px" width="11" height="13"><use href="#i-wxml"/></svg><span class="t" style="left:32.500px;top:8.500px;font-size:13px;line-height:14px;color:#aaa">coins.wxml</span></div>
<div class="tab" style="left:243px;width:120px"><svg style="left:11.500px;top:9px" width="12" height="12"><use href="#i-js"/></svg><span class="t" style="left:32.500px;top:8.500px;font-size:13px;line-height:14px;color:#aaa;font-style:italic">app.js</span></div>
<svg style="left:1100px;top:9px" width="13" height="12" viewBox="0 0 13 12" fill="none" stroke="#ddd" stroke-width="1.100"><rect x="0.600" y="0.600" width="11.800" height="10.800" rx="0.800"/><path d="M6.500 0.600v10.800"/></svg>
<svg style="left:1132px;top:14px" width="13" height="3" viewBox="0 0 13 3" fill="#ccc"><circle cx="1.500" cy="1.500" r="1"/><circle cx="6.500" cy="1.500" r="1"/><circle cx="11.500" cy="1.500" r="1"/></svg>
</div>
<div id="editor"></div>
<svg style="left:708px;top:127px" width="15" height="12" viewBox="0 0 15 12" fill="none" stroke="#aaa" stroke-width="1"><path d="M0 1.500h2M3.500 1.500h11.500M0 4.500h2M3.500 4.500h11.500M0 7.500h2M3.500 7.500h11.500M0 10.500h2M3.500 10.500h11.500"/></svg>
<svg style="left:740px;top:126px" width="12" height="14" viewBox="0 0 12 14" fill="none" stroke="#aaa" stroke-width="1.200"><path d="M1.500 0.700h9v12.300L6 9 1.500 13z"/></svg>
<svg style="left:769px;top:128px" width="14" height="11" viewBox="0 0 14 11" fill="none" stroke="#bbb" stroke-width="1.200"><path d="M14 5.500H1.200M6 0.700L1.200 5.500 6 10.300"/></svg>
<svg style="left:797px;top:128px" width="14" height="11" viewBox="0 0 14 11" fill="none" stroke="#555" stroke-width="1.200"><path d="M0 5.500h12.800M8 0.700l4.800 4.800L8 10.300"/></svg>
<svg style="left:827px;top:127px" width="16" height="12"><use href="#i-json"/></svg>
<div class="t" style="left:849px;top:127px;font-size:13px;line-height:14px;color:#aaa">app.json</div>
<svg style="left:902px;top:128px" width="7" height="11" viewBox="0 0 7 11" fill="none" stroke="#aaa" stroke-width="1.200"><path d="M1 0.700l4.800 4.800L1 10.300"/></svg>
<div class="t" style="left:914px;top:126px;font-size:13px;line-height:14px;color:#aaa;letter-spacing:1.500px">{}</div>
<div class="t" style="left:935px;top:127px;font-size:13px;line-height:14px;color:#aaa">window</div>
<svg style="left:985px;top:128px" width="7" height="11" viewBox="0 0 7 11" fill="none" stroke="#aaa" stroke-width="1.200"><path d="M1 0.700l4.800 4.800L1 10.300"/></svg>
<svg style="left:997px;top:127px" width="15" height="11" viewBox="0 0 15 11" fill="none" stroke="#aaa" stroke-width="1"><rect x="0.500" y="0.500" width="14" height="10" rx="1"/><path d="M2.500 4.500h2.500v2.500h-2.500zM6.500 3.500v3.500h2v-2h-2M12 4.500h-2v2.500h2" stroke-width="0.800"/></svg>
<div class="t" style="left:1018px;top:127px;font-size:13px;line-height:14px;color:#aaa">navigationBarTitleText</div>
<div class="abs" style="left:785px;top:400px;width:1080px;height:32px;background:#474747"></div>
<div class="abs" style="left:785px;top:176px;width:1px;height:320px;background:#4a4a4a"></div>
<div class="abs" style="left:803px;top:176px;width:1px;height:320px;background:#4a4a4a"></div>
<div class="abs" style="left:820px;top:208px;width:1px;height:64px;background:#4a4a4a"></div>
<div class="abs" style="left:838px;top:208px;width:1px;height:64px;background:#4a4a4a"></div>
<div class="abs" style="left:838px;top:336px;width:1px;height:128px;background:#4a4a4a"></div>
<div class="abs" style="left:908px;top:304px;width:9px;height:32px;border:1px solid #8e8e8e;background:#263026"></div>
<div class="abs" style="left:820px;top:464px;width:9px;height:32px;border:1px solid #8e8e8e;background:#263026"></div>
<div class="abs" style="left:820px;top:335px;width:1px;height:130px;background:#a463ad"></div>
<div class="abs" style="left:820px;top:335px;width:97px;height:1px;background:#a463ad"></div>
<div class="abs" style="left:820px;top:464px;width:9px;height:1px;background:#a463ad"></div>
<div class="ln" style="top:144px;color:#5c5c5c">1</div>
<div class="cl" style="top:144px"><span class="b1">{</span></div>
<div class="ln" style="top:176px;color:#5c5c5c">2</div>
<div class="cl" style="top:176px">    <span class="k">"pages"</span><span class="k">: </span><span class="b2">[</span></div>
<div class="ln" style="top:208px;color:#5c5c5c">3</div>
<div class="cl" style="top:208px">        <span class="k">"</span><span class="s">pages/coins/coins</span><span class="k">"</span><span class="k">,</span></div>
<div class="ln" style="top:240px;color:#5c5c5c">4</div>
<div class="cl" style="top:240px">        <span class="k">"</span><span class="s">pages/about/about</span><span class="k">"</span></div>
<div class="ln" style="top:272px;color:#5c5c5c">5</div>
<div class="cl" style="top:272px">    <span class="b2">]</span><span class="k">,</span></div>
<div class="ln" style="top:304px;color:#5c5c5c">6</div>
<div class="cl" style="top:304px">    <span class="k">"window"</span><span class="k">: </span><span class="b2">{</span></div>
<div class="ln" style="top:336px;color:#5c5c5c">7</div>
<div class="cl" style="top:336px">        <span class="k">"backgroundTextStyle"</span><span class="k">: </span><span class="k">"</span><span class="s">light</span><span class="k">"</span><span class="k">,</span></div>
<div class="ln" style="top:368px;color:#5c5c5c">8</div>
<div class="cl" style="top:368px">        <span class="k">"navigationBarBackgroundColor"</span><span class="k">: </span><span class="k">"</span><span class="s">#fff</span><span class="k">"</span><span class="k">,</span></div>
<div class="ln" style="top:400px;color:#c6c6c6">9</div>
<div class="cl" style="top:400px">        <span class="k">"navigationBarTitleText"</span><span class="k">: </span><span class="k">"</span><span class="s">ASP300<span style="font-family:'Liberation Sans',sans-serif;font-size:15.900px">源码测试</span></span><span class="k">"</span><span class="k">,</span></div>
<div class="ln" style="top:432px;color:#5c5c5c">10</div>
<div class="cl" style="top:432px">        <span class="k">"navigationBarTextStyle"</span><span class="k">: </span><span class="k">"</span><span class="s">black</span><span class="k">"</span></div>
<div class="ln" style="top:464px;color:#5c5c5c">11</div>
<div class="cl" style="top:464px">    <span class="b2">}</span></div>
<div class="ln" style="top:496px;color:#5c5c5c">12</div>
<div class="cl" style="top:496px"><span class="b1">}</span></div>
<svg style="left:766px;top:149px" width="11" height="7" viewBox="0 0 11 7" fill="none" stroke="#c5c5c5" stroke-width="1.200"><path d="M0.700 0.800L5.500 5.600 10.300 0.800"/></svg>
<svg style="left:766px;top:181px" width="11" height="7" viewBox="0 0 11 7" fill="none" stroke="#c5c5c5" stroke-width="1.200"><path d="M0.700 0.800L5.500 5.600 10.300 0.800"/></svg>
<svg style="left:766px;top:309px" width="11" height="7" viewBox="0 0 11 7" fill="none" stroke="#c5c5c5" stroke-width="1.200"><path d="M0.700 0.800L5.500 5.600 10.300 0.800"/></svg>
<div class="abs" style="left:1851px;top:144px;width:15px;height:606px;border-left:1px solid rgba(255,255,255,.1);border-top:1px solid rgba(255,255,255,.1)"></div>
<div class="abs" style="left:1852px;top:303px;width:14px;height:2px;background:#8a8a8a"></div>
<!-- sec_panel.html -->
<div id="panel"></div>
<!-- panel tabs -->
<div class="t" style="left:721px;top:761px;font-size:11px;color:#e7e7e7">调试器</div>
<div class="abs" style="left:721px;top:779px;width:33px;height:1px;background:#e7e7e7"></div>
<div class="abs" style="left:762px;top:757px;width:27px;height:17px;border-radius:9px;background:#d9463e;color:#fff;font-size:11px;line-height:17px;text-align:center;white-space:nowrap">3, 1</div>
<div class="t" style="left:809px;top:761px;font-size:11px;color:#979797">问题</div>
<div class="t" style="left:851px;top:761px;font-size:11px;color:#979797">输出</div>
<div class="t" style="left:893px;top:761px;font-size:11px;color:#979797">终端</div>
<div class="t" style="left:935px;top:761px;font-size:11px;color:#979797">代码质量</div>
<svg style="left:1802px;top:765px" width="10" height="6" viewBox="0 0 10 6" fill="none" stroke="#ddd" stroke-width="1.100"><path d="M0.500 5.500L5 0.800 9.500 5.500"/></svg>
<svg style="left:1834.500px;top:763.500px" width="9" height="9" viewBox="0 0 9 9" fill="none" stroke="#ddd" stroke-width="1.100"><path d="M0.500 0.500l8 8M8.500 0.500l-8 8"/></svg>

<!-- devtools toolbar -->
<div id="dtbar"></div>
<svg style="left:711px;top:787px" width="14" height="14" viewBox="0 0 14 14"><path d="M10.500 5V1.700C10.500 1 10 0.600 9.400 0.600H1.700C1 0.600 0.600 1 0.600 1.700V9.400C0.600 10 1 10.500 1.700 10.500H5" fill="none" stroke="#7c7c7c" stroke-width="1.200"/><path d="M5.800 5.800L13.200 8.600 10 10 13 13 12 14 9 11 7.800 13.800z" fill="#8a8a8a"/></svg>
<div class="abs" style="left:734px;top:785px;width:1px;height:16px;background:#4a4a4a"></div>
<div class="abs" style="left:742px;top:780px;width:54px;height:26px;background:#000"></div>
<div class="dt" style="left:754px;color:#fff">Wxml</div>
<div class="dt" style="left:807.500px">Console</div>
<div class="dt" style="left:873.500px">Sources</div>
<div class="dt" style="left:939px">Network</div>
<div class="dt" style="left:1007.500px">Performance</div>
<div class="dt" style="left:1097.500px">Memory</div>
<div class="dt" style="left:1165.500px">AppData</div>
<div class="dt" style="left:1235.500px">Storage</div>
<div class="dt" style="left:1299.500px">Security</div>
<div class="dt" style="left:1374.500px">Sensor</div>
<div class="dt" style="left:1433.500px">Mock</div>
<div class="dt" style="left:1486.500px">Audits</div>
<div class="dt" style="left:1543.500px">Vulnerability</div>
<!-- error / warning counters -->
<svg style="left:1717px;top:788px" width="10" height="10" viewBox="0 0 10 10"><circle cx="5" cy="5" r="5" fill="#e5384e"/><path d="M3.200 3.200l3.600 3.600M6.800 3.200L3.200 6.800" stroke="#fff" stroke-width="1.300"/></svg>
<div class="dt" style="left:1731px">3</div>
<svg style="left:1743.500px;top:787.500px" width="11" height="10" viewBox="0 0 11 10"><path d="M5.500 0.300L10.800 9.700H0.200z" fill="#f4bd00"/><path d="M5.500 3.300v3.500M5.500 7.600v1.100" stroke="#fff" stroke-width="1.100"/></svg>
<div class="dt" style="left:1758px">1</div>
<div class="abs" style="left:1774px;top:785px;width:1px;height:16px;background:#46474a"></div>
<!-- gear -->
<svg style="left:1785.500px;top:785.500px" width="15" height="15" viewBox="-7.500 -7.500 15 15"><g fill="#919191"><circle r="5.200"/><g id="gt"><rect x="-1.700" y="-7.300" width="3.400" height="14.600" rx="0.600"/></g><rect x="-1.700" y="-7.300" width="3.400" height="14.600" rx="0.600" transform="rotate(60)"/><rect x="-1.700" y="-7.300" width="3.400" height="14.600" rx="0.600" transform="rotate(120)"/></g><circle r="2.300" fill="#292a2d"/></svg>
<svg style="left:1819.500px;top:786.500px" width="4" height="14" viewBox="0 0 4 14" fill="#919191"><circle cx="2" cy="1.800" r="1.500"/><circle cx="2" cy="7" r="1.500"/><circle cx="2" cy="12.200" r="1.500"/></svg>
<svg style="left:1841px;top:786px" width="17" height="15" viewBox="0 0 17 15" fill="none" stroke="#6e6e6e" stroke-width="2"><rect x="6" y="1" width="10" height="8.500"/><path d="M3 5H1V14H12V12"/></svg>

<!-- body -->
<div id="dtbody"></div>
<div class="t" style="left:715px;top:813px;font-family:'Liberation Mono',monospace;font-size:11px;line-height:13px;color:#5db0d7">&lt;page&gt;</div>
<svg style="left:717px;top:829.500px" width="6" height="9" viewBox="0 0 6 9"><path d="M0.800 0.800v7.400L5.500 4.500z" fill="#9aa0a6"/></svg>
<div class="t" style="left:726.500px;top:830px;font-family:'Liberation Mono',monospace;font-size:11px;line-height:13px;color:#5db0d7">&lt;view <span style="color:#9bbbdc">class</span>=<span style="color:#5db0d7">"</span><span style="color:#f29766">container</span><span style="color:#5db0d7">"</span>&gt;<span style="color:#ccc">…</span>&lt;/view&gt;</div>
<div class="t" style="left:715px;top:847px;font-family:'Liberation Mono',monospace;font-size:11px;line-height:13px;color:#5db0d7">&lt;/page&gt;</div>
<!-- bottom drawer line + divider -->
<div class="abs" style="left:701px;top:1029px;width:839px;height:1px;background:#4c4c4c"></div>
<div class="abs" style="left:1540px;top:807px;width:1px;height:245px;background:#4c4c4c"></div>
<!-- styles pane -->
<div class="abs" style="left:1541px;top:807px;width:325px;height:27px;background:#292a2d;border-bottom:1px solid #3d3d3d"></div>
<div class="abs" style="left:1541px;top:807px;width:50px;height:26px;background:#000"></div>
<div class="dt" style="left:1550.500px;top:807px;color:#fff">Styles</div>
<div class="dt" style="left:1600.500px;top:807px">Computed</div>
<div class="dt" style="left:1676.500px;top:807px">Dataset</div>
<div class="dt" style="left:1736.500px;top:807px">Component Data</div>
<svg style="left:1846px;top:816px" width="9" height="8" viewBox="0 0 9 8" fill="none" stroke="#aaa" stroke-width="1"><path d="M0.500 0.500L4 4 0.500 7.500M4.500 0.500L8 4 4.500 7.500"/></svg>
<div class="abs" style="left:1541px;top:834px;width:325px;height:27px;background:#292a2d;border-bottom:1px solid #333"></div>
<div class="abs" style="left:1543px;top:837px;width:251px;height:21px;background:#222"></div>
<div class="t" style="left:1548px;top:841.500px;font-size:12px;line-height:13px;color:#8a8a8a">Filter</div>
<div class="t" style="left:1804.500px;top:842px;font-family:'Liberation Mono',monospace;font-weight:bold;font-size:10.400px;line-height:13px;color:#ddd">.cls</div>
<svg style="left:1844px;top:842px" width="10" height="10" viewBox="0 0 10 10" stroke="#5a5a5a" stroke-width="1.200"><path d="M5 0v10M0 5h10"/></svg>
<svg style="left:1855px;top:852px" width="5" height="5" viewBox="0 0 5 5"><path d="M5 0v5H0z" fill="#4a4a4a"/></svg>

<!-- sec_status.html -->
<div id="status"></div>
<svg style="left:516.500px;top:1060px" width="13" height="13" viewBox="0 0 13 13" fill="none" stroke="#aaa" stroke-width="1"><circle cx="6.500" cy="6.500" r="5.800"/><path d="M4.300 4.300l4.400 4.400M8.700 4.300L4.300 8.700"/></svg>
<div class="t" style="left:533px;top:1061px;font-size:12px;line-height:13px;color:#aaa">0</div>
<svg style="left:543.500px;top:1060px" width="13" height="12" viewBox="0 0 13 12" fill="none" stroke="#aaa" stroke-width="1"><path d="M6.500 1L12.300 11.300H0.700z"/><path d="M6.500 4.500v3.800M6.500 9.200v1"/></svg>
<div class="t" style="left:560px;top:1061px;font-size:12px;line-height:13px;color:#aaa">0</div>
<div class="t" style="left:1623px;top:1061px;font-size:12px;line-height:13px;color:#aaa">行 9<span style="display:inline-block;width:12px;text-align:left">,</span>列 44</div>
<div class="t" style="left:1700.500px;top:1061px;font-size:12px;line-height:13px;color:#aaa">空格: 2</div>
<div class="t" style="left:1754px;top:1061px;font-size:12px;line-height:13px;color:#aaa">UTF-8</div>
<div class="t" style="left:1801.500px;top:1061px;font-size:12px;line-height:13px;color:#aaa">LF</div>
<div class="t" style="left:1828px;top:1061px;font-size:12px;line-height:13px;color:#aaa">JSON</div>
<!-- watermark -->
<svg style="left:1660px;top:998px" width="206" height="82" viewBox="0 0 206 82">
  <defs><linearGradient id="gasp" x1="0" y1="0" x2="0" y2="1"><stop offset="0" stop-color="#1a60a4"/><stop offset=".5" stop-color="#2c82ad"/><stop offset="1" stop-color="#5aa8b3"/></linearGradient></defs>
  <g font-family="Liberation Sans, sans-serif" font-weight="bold" font-style="italic">
    <g transform="translate(11 39) scale(0.955 1)">
      <text x="0" y="0" font-size="39" letter-spacing="-1.200" fill="none" stroke="#7b9ca5" stroke-width="5.400" stroke-linejoin="round">ASP300</text>
      <text x="1.800" y="1.200" font-size="39" letter-spacing="-1.200" fill="#15151b" stroke="#15151b" stroke-width="1">ASP300</text>
      <text x="0" y="0" font-size="39" letter-spacing="-1.200" fill="url(#gasp)" stroke="url(#gasp)" stroke-width="0.900">ASP300</text>
    </g>
    <path d="M86 27.500h54" stroke="#c5e6e8" stroke-width="0.800" opacity=".65"/>
    <rect x="147" y="7" width="57.500" height="34" rx="6" fill="#8a4814"/>
    <text x="151.500" y="33" font-size="24" fill="#e6b799" stroke="#e6b799" stroke-width="0.500">源码</text>
    <text x="35" y="69" font-size="25.500" fill="#3e3e3e" fill-opacity=".93" stroke="#ababab" stroke-width="1.300" paint-order="stroke">asp300.net</text>
  </g>
</svg>
<div class="abs" style="left:1865px;top:92px;width:1px;height:988px;background:#424242"></div>

</div>
</body></html>
